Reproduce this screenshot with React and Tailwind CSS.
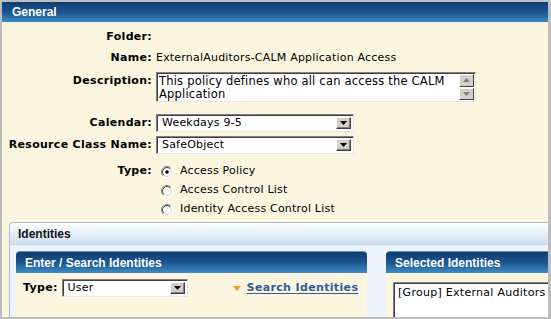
import React from "react";

const bodyFont = { fontFamily: '"DejaVu Sans", Verdana, sans-serif' };
const headFont = { fontFamily: '"Liberation Sans", Arial, sans-serif' };

function DownButton() {
  return (
    <div className="w-[15px] h-full flex items-center justify-center bg-[#d4d0c8] border border-[#ffffff] border-r-[#404040] border-b-[#404040] shadow-[inset_-1px_-1px_0_#808080]">
      <svg width="7" height="4" viewBox="0 0 7 4">
        <path d="M0 0 H7 L3.5 4 Z" fill="#000" />
      </svg>
    </div>
  );
}

function Select({ value, width }) {
  return (
    <div
      className="h-[18px] flex items-stretch bg-white border border-[#808080] border-r-[#e6e6e6] border-b-[#e6e6e6] shadow-[inset_1px_1px_0_#404040] pl-[5px] pr-[2px] py-[2px]"
      style={{ width }}
    >
      <span className="flex-1 text-[11px] leading-[12px] tracking-[0.2px] text-black" style={bodyFont}>
        {value}
      </span>
      <DownButton />
    </div>
  );
}

function Radio({ checked }) {
  return (
    <svg width="12" height="12" viewBox="0 0 12 12">
      <defs>
        <linearGradient id="ro" x1="0" y1="0" x2="1" y2="1">
          <stop offset="0.45" stopColor="#808080" />
          <stop offset="0.55" stopColor="#ffffff" />
        </linearGradient>
        <linearGradient id="ri" x1="0" y1="0" x2="1" y2="1">
          <stop offset="0.45" stopColor="#404040" />
          <stop offset="0.55" stopColor="#d4d0c8" />
        </linearGradient>
      </defs>
      <circle cx="6" cy="6" r="5.5" fill="white" stroke="url(#ro)" strokeWidth="1" />
      <circle cx="6" cy="6" r="4.5" fill="white" stroke="url(#ri)" strokeWidth="1" />
      {checked && <circle cx="6" cy="6" r="1.8" fill="#000" />}
    </svg>
  );
}

function Label({ children, className = "" }) {
  return (
    <div
      className={`w-[150px] text-right font-bold text-[11px] tracking-[0.3px] text-black ${className}`}
      style={bodyFont}
    >
      {children}
    </div>
  );
}

function PanelHeader({ children }) {
  return (
    <div
      className="h-[22px] flex items-center pl-[9px] rounded-t-[4px] bg-gradient-to-b from-[#0f3c70] via-[#1b5590] to-[#3f8cc4] text-white font-bold text-[12px] border-t border-[#6c8db0]"
      style={headFont}
    >
      {children}
    </div>
  );
}

export default function App() {
  return (
    <div className="w-[551px] h-[319px] bg-[#bdbdbd] pt-[2px] pl-[2px] pr-[3px] pb-[2px] overflow-hidden">
      <div className="w-full h-full bg-[#fcf6e0] flex flex-col overflow-hidden">
        <div
          className="h-[20px] shrink-0 flex items-center pl-[10px] bg-gradient-to-b from-[#0f3c70] via-[#1b5590] to-[#3d8ac2] text-white font-bold text-[12px]"
          style={headFont}
        >
          General
        </div>

        <div className="flex flex-col text-[11px] tracking-[0.2px] text-black" style={bodyFont}>
          <div className="mt-[8px] h-[14px] flex items-center gap-[4px]">
            <Label>Folder:</Label>
          </div>
          <div className="mt-[7px] h-[14px] flex items-center gap-[4px]">
            <Label>Name:</Label>
            <span>ExternalAuditors-CALM Application Access</span>
          </div>
          <div className="mt-[7px] flex items-start gap-[4px]">
            <Label className="mt-[1px]">Description:</Label>
            <div className="w-[320px] h-[30px] flex bg-white border border-[#808080] border-r-[#e6e6e6] border-b-[#e6e6e6] shadow-[inset_1px_1px_0_#404040] pl-[2px] pr-[1px] py-[1px]">
              <div className="flex-1 text-[11.5px] leading-[13px] tracking-[0.2px] pt-[1px]">
                This policy defines who all can access the CALM Application
              </div>
              <div className="w-[15px] flex flex-col gap-[1px]">
                <div className="flex-1 flex items-center justify-center bg-[#d4d0c8] border border-[#ffffff] border-r-[#404040] border-b-[#404040]">
                  <svg width="7" height="4" viewBox="0 0 7 4">
                    <path d="M0 4 H7 L3.5 0 Z" fill="#808080" />
                  </svg>
                </div>
                <div className="flex-1 flex items-center justify-center bg-[#d4d0c8] border border-[#ffffff] border-r-[#404040] border-b-[#404040]">
                  <svg width="7" height="4" viewBox="0 0 7 4">
                    <path d="M0 0 H7 L3.5 4 Z" fill="#808080" />
                  </svg>
                </div>
              </div>
            </div>
          </div>
          <div className="mt-[12px] flex items-center gap-[4px]">
            <Label>Calendar:</Label>
            <Select value="Weekdays 9-5" width={198} />
          </div>
          <div className="mt-[4px] flex items-center gap-[4px]">
            <Label>Resource Class Name:</Label>
            <Select value="SafeObject" width={198} />
          </div>
          <div className="mt-[8px] flex items-start gap-[4px]">
            <Label className="mt-[1px]">Type:</Label>
            <div className="flex flex-col pl-[5px]">
              {[
                ["Access Policy", true],
                ["Access Control List", false],
                ["Identity Access Control List", false],
              ].map(([t, c]) => (
                <div key={t} className="h-[19px] flex items-center gap-[7px]">
                  <Radio checked={c} />
                  <span>{t}</span>
                </div>
              ))}
            </div>
          </div>
        </div>

        <div className="mt-[3px] ml-[7px] flex-1 flex flex-col border-l border-t border-[#a8bdd3] rounded-tl-[4px] bg-[#edf3fb] overflow-hidden">
          <div
            className="h-[22px] shrink-0 flex items-center pl-[8px] bg-gradient-to-b from-[#ffffff] to-[#cddff1] border-b border-[#c7d7e8] font-bold text-[12px] text-[#111]"
            style={headFont}
          >
            Identities
          </div>
          <div className="flex gap-[19px] pt-[6px] pl-[6px] flex-1">
            <div className="w-[351px] shrink-0 flex flex-col">
              <PanelHeader>Enter / Search Identities</PanelHeader>
              <div className="flex-1 bg-[#fcf6e0] flex items-start pt-[6px] pl-[7px]" style={bodyFont}>
                <div className="h-[18px] flex items-center gap-[4px]">
                  <span className="font-bold text-[11px] tracking-[0.3px] text-black">Type:</span>
                  <Select value="User" width={126} />
                </div>
                <div className="h-[18px] ml-[45px] flex items-center gap-[6px]">
                  <svg width="8" height="5" viewBox="0 0 8 5">
                    <path d="M0 0 H8 L4 5 Z" fill="#f39a1e" />
                  </svg>
                  <span className="font-bold text-[11px] tracking-[0.35px] text-[#2b5f95] underline underline-offset-[2px]">
                    Search Identities
                  </span>
                </div>
              </div>
            </div>
            <div className="w-[200px] shrink-0 flex flex-col">
              <PanelHeader>Selected Identities</PanelHeader>
              <div className="flex-1 bg-[#fcf6e0] pt-[9px] pl-[7px]">
                <div
                  className="h-[60px] bg-white border border-[#808080] shadow-[inset_1px_1px_0_#404040] pl-[4px] pt-[2px] text-[11px] tracking-[0.28px] text-black"
                  style={bodyFont}
                >
                  [Group] External Auditors
                </div>
              </div>
            </div>
          </div>
        </div>
      </div>
    </div>
  );
}
